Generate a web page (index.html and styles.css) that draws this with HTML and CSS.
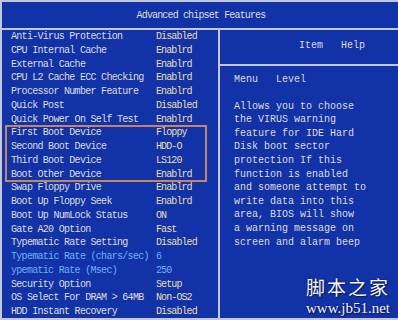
FILE: index.html
```html
<!DOCTYPE html>
<html lang="en">
<head>
    <meta charset="UTF-8">
    <title>Advanced chipset Features</title>
    <link rel="stylesheet" href="styles.css">
</head>
<body>
    <div class="bios">
        <div class="title">Advanced chipset Features</div>

        <div class="main">
            <div class="settings">
                <div class="row"><span>Anti-Virus Protection</span><span class="val">Disabled</span></div>
                <div class="row"><span>CPU Internal Cache</span><span class="val">Enablrd</span></div>
                <div class="row"><span>External Cache</span><span class="val">Enablrd</span></div>
                <div class="row"><span>CPU L2 Cache ECC Checking</span><span class="val">Enablrd</span></div>
                <div class="row"><span>Processor Number Feature</span><span class="val">Enablrd</span></div>
                <div class="row"><span>Quick Post</span><span class="val">Disabled</span></div>
                <div class="row"><span>Quick Power On Self Test</span><span class="val">Enablrd</span></div>

                <div class="boot-group">
                    <div class="row"><span>First Boot Device</span><span class="val">Floppy</span></div>
                    <div class="row"><span>Second Boot Device</span><span class="val">HDD-O</span></div>
                    <div class="row"><span>Third Boot Device</span><span class="val">LS120</span></div>
                    <div class="row"><span>Boot Other Device</span><span class="val">Enablrd</span></div>
                </div>

                <div class="row"><span>Swap Floppy Drive</span><span class="val">Enablrd</span></div>
                <div class="row"><span>Boot Up Floppy Seek</span><span class="val">Enablrd</span></div>
                <div class="row"><span>Boot Up NumLock Status</span><span class="val">ON</span></div>
                <div class="row"><span>Gate A20 Option</span><span class="val">Fast</span></div>
                <div class="row"><span>Typematic Rate Setting</span><span class="val">Disabled</span></div>
                <div class="row dim"><span>Typematic Rate (chars/sec)</span><span class="val">6</span></div>
                <div class="row dim"><span>ypematic Rate (Msec)</span><span class="val">250</span></div>
                <div class="row"><span>Security Option</span><span class="val">Setup</span></div>
                <div class="row"><span>OS Select For DRAM &gt; 64MB</span><span class="val">Non-OS2</span></div>
                <div class="row"><span>HDD Instant Recovery</span><span class="val">Disabled</span></div>
            </div>

            <div class="help">
                <div class="help-head">Item&nbsp;&nbsp;&nbsp;Help</div>
                <div class="help-body">
                    <div class="level">Menu&nbsp;&nbsp;&nbsp;Level</div>
                    <p class="help-text">Allows you to choose<br>the VIRUS warning<br>feature for IDE Hard<br>Disk boot sector<br>protection If this<br>function is enabled<br>and someone attempt to<br>write data into this<br>area, BIOS will show<br>a warning message on<br>screen and alarm beep</p>
                </div>
            </div>
        </div>

        <!-- site watermark sits over the help panel -->
        <div class="watermark">
            <div class="wm-cn">脚本之家</div>
            <div class="wm-url">www.jb51.net</div>
        </div>
    </div>
</body>
</html>
```

FILE: styles.css
```css
body {
    margin: 0;
    background: #1232a8;
}

.bios {
    position: relative;
    width: 398px;
    height: 320px;
    box-sizing: border-box;
    background: #1232a8;
    border-top: 2px solid #c4c8dc;
    border-left: 2px solid #c4c8dc;
    border-bottom: 2px solid #c4c8dc;
    font-family: "Liberation Mono", "DejaVu Sans Mono", monospace;
    font-size: 10px;
    color: #dedede;
    overflow: hidden;
    display: flex;
    flex-direction: column;
}

.title {
    height: 26px;
    line-height: 28px;
    text-align: center;
    letter-spacing: -0.85px;
    padding-left: 2px;
    border-bottom: 2px solid #c4c8dc;
}

.main {
    flex: 1;
    display: grid;
    grid-template-columns: 216px 1fr;
}

.row {
    display: grid;
    grid-template-columns: 145px 1fr;
    height: 13.75px;
    line-height: 13.75px;
    padding-left: 9px;
    letter-spacing: -0.7px;
    white-space: nowrap;
}

.val {
    color: #eadfae;
    letter-spacing: -0.9px;
}

.dim,
.dim .val {
    color: #6cb2f4;
}

.boot-group {
    margin: 0 12px 0 4px;
    outline: 2px solid #c8845e;
    outline-offset: -1px;
}

.boot-group .row {
    padding-left: 5px;
}

.help {
    border-left: 2px solid #c4c8dc;
    display: flex;
    flex-direction: column;
}

.help-head {
    height: 34px;
    line-height: 32px;
    padding-left: 79px;
    border-bottom: 2px solid #c4c8dc;
}

.help-body {
    padding: 7px 0 0 14px;
}

.level {
    line-height: 13.6px;
}

.help-text {
    margin: 13px 0 0;
    line-height: 13.6px;
}

.watermark {
    position: absolute;
    right: 8px;
    bottom: 2px;
    display: flex;
    flex-direction: column;
    align-items: center;
    gap: 5px;
    color: #f4f4f4;
    text-shadow: 0 0 2px #0a1a60, 1px 1px 1px #0a1a60;
}

.wm-cn {
    font-family: "Noto Sans CJK SC", sans-serif;
    font-size: 19px;
    line-height: 19px;
    letter-spacing: 2px;
}

.wm-url {
    font-family: "Liberation Serif", serif;
    font-size: 15px;
    line-height: 15px;
}
```
